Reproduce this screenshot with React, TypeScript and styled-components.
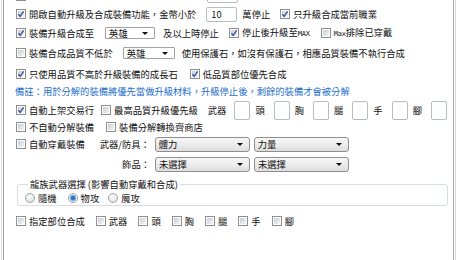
import React from "react";
import styled, { createGlobalStyle } from "styled-components";

const GlobalStyle = createGlobalStyle`
  html, body {
    margin: 0;
    padding: 0;
    background: #fff;
  }
  body {
    font-family: "Noto Sans CJK TC", "Liberation Sans", sans-serif;
    font-size: 9.3px;
    color: #111;
  }
`;

const Frame = styled.div`
  width: 460px;
  height: 260px;
  overflow: hidden;
  display: flex;
  background: #fff;
`;

const EdgeLine = styled.div<{ $color: string; $ml?: number }>`
  flex: none;
  width: 1px;
  margin-left: ${p => p.$ml ?? 0}px;
  background: ${p => p.$color};
`;

const Panel = styled.div`
  flex: none;
  box-sizing: border-box;
  width: 449px;
  padding-left: 12px;
  display: flex;
  flex-direction: column;
`;

const Row = styled.div<{ $mt: number }>`
  flex: none;
  display: flex;
  align-items: center;
  height: 16px;
  margin-top: ${p => p.$mt}px;
  white-space: nowrap;
`;

const Text = styled.span<{ $ml?: number; $color?: string }>`
  margin-left: ${p => p.$ml ?? 0}px;
  color: ${p => p.$color ?? "#111"};
  line-height: 12px;
`;

// bitmap-looking latin bits ("MAX", "Max")
const Tiny = styled.span`
  font-family: "DejaVu Sans Mono", monospace;
  font-size: 7px;
  letter-spacing: -0.2px;
`;

const CheckWrap = styled.label<{ $ml?: number }>`
  display: flex;
  align-items: center;
  margin-left: ${p => p.$ml ?? 0}px;
`;

const Box = styled.span`
  box-sizing: border-box;
  width: 10px;
  height: 10px;
  border: 1px solid #8e8f8f;
  background: #fff;
  padding: 1px;
  display: flex;
`;

const BoxInner = styled.span`
  flex: 1;
  display: flex;
  align-items: center;
  justify-content: center;
  background: linear-gradient(135deg, #c9cdd3, #f4f5f6);
`;

const CheckText = styled.span`
  margin-left: 3px;
  line-height: 12px;
`;

const CheckBox = ({ checked, label, ml }: { checked?: boolean; label?: React.ReactNode; ml?: number }) => (
  <CheckWrap $ml={ml}>
    <Box>
      <BoxInner>
        {checked && (
          <svg width="8" height="8" viewBox="0 0 8 8" style={{ margin: -2 }}>
            <path d="M1.4 4.2 L3.2 6.3 L6.7 1.3" fill="none" stroke="#3a55a0" strokeWidth="1.4" />
          </svg>
        )}
      </BoxInner>
    </Box>
    {label && <CheckText>{label}</CheckText>}
  </CheckWrap>
);

const RadioDot = styled.span<{ $on?: boolean }>`
  box-sizing: border-box;
  width: 10px;
  height: 10px;
  border-radius: 50%;
  border: 1px solid #9ea3a8;
  background: ${p =>
    p.$on
      ? "radial-gradient(circle, #1c5fb8 0, #3b86d6 2px, #9cc6ee 3px, #eef1f4 3.6px)"
      : "radial-gradient(circle at 40% 35%, #fdfdfd, #d6dade)"};
`;

const Radio = ({ on, label, ml }: { on?: boolean; label: string; ml?: number }) => (
  <CheckWrap $ml={ml}>
    <RadioDot $on={on} />
    <CheckText>{label}</CheckText>
  </CheckWrap>
);

const Field = styled.div<{ $ml?: number; $w: number; $h: number }>`
  flex: none;
  box-sizing: border-box;
  margin-left: ${p => p.$ml ?? 0}px;
  width: ${p => p.$w}px;
  height: ${p => p.$h}px;
  border: 1px solid #b5bcc4;
  border-radius: 2px;
  background: #fff;
  padding-left: 4px;
  display: flex;
  align-items: center;
  line-height: 12px;
`;

const Combo = styled.div<{ $ml?: number; $w: number; $h: number; $raised?: boolean }>`
  flex: none;
  box-sizing: border-box;
  margin-left: ${p => p.$ml ?? 0}px;
  width: ${p => p.$w}px;
  height: ${p => p.$h}px;
  border: 1px solid ${p => (p.$raised ? "#8f8f8f" : "#a3a3a3")};
  border-radius: ${p => (p.$raised ? 3 : 1)}px;
  background: ${p => (p.$raised ? "linear-gradient(#f7f7f7, #ececec 50%, #dedede)" : "#fff")};
  padding: 0 6px 0 3px;
  display: flex;
  align-items: center;
  justify-content: space-between;
  line-height: 12px;
`;

const Arrow = styled.span`
  width: 0;
  height: 0;
  border-left: 3px solid transparent;
  border-right: 3px solid transparent;
  border-top: 3px solid #111;
`;

const Select = ({ value, w, h, ml, raised }: { value: string; w: number; h: number; ml?: number; raised?: boolean }) => (
  <Combo $w={w} $h={h} $ml={ml} $raised={raised}>
    <span>{value}</span>
    <Arrow />
  </Combo>
);

const FieldLabel = styled.span<{ $ml: number }>`
  flex: none;
  width: 56px;
  margin-left: ${p => p.$ml}px;
  text-align: right;
  line-height: 12px;
`;

const Group = styled.fieldset`
  flex: none;
  box-sizing: border-box;
  width: 431px;
  margin: 6px 0 0 1px;
  padding: 0 0 0 7px;
  border: 1px solid #d7dee4;
  border-radius: 3px;
`;

const Legend = styled.legend`
  margin-left: 3px;
  padding: 0 2px;
  line-height: 12px;
`;

const RadioRow = styled.div`
  display: flex;
  align-items: center;
  height: 15px;
`;

const slots = ["頭", "胸", "腿", "手", "腳"];
const parts = ["武器", "頭", "胸", "腿", "手", "腳"];

export default function App() {
  return (
    <>
      <GlobalStyle />
      <Frame>
        <EdgeLine $color="#dadada" $ml={1} />
        <EdgeLine $color="#a2a2a2" $ml={1} />
        <Panel>
          <Row $mt={-12}>
            <CheckBox />
            <Field $ml={181} $w={31} $h={14} />
          </Row>
          <Row $mt={2}>
            <CheckBox checked label="開啟自動升級及合成裝備功能，金幣小於" />
            <Field $ml={10} $w={31} $h={15}>10</Field>
            <Text $ml={5}>萬停止</Text>
            <CheckBox ml={10} checked label="只升級合成當前職業" />
          </Row>
          <Row $mt={3}>
            <CheckBox checked label="裝備升級合成至" />
            <Select value="英雄" w={50} h={12} ml={11} />
            <Text $ml={8}>及以上時停止</Text>
            <CheckBox ml={10} checked label={<>停止後升級至<Tiny>MAX</Tiny></>} />
            <CheckBox ml={11} label={<><Tiny>Max</Tiny>排除已穿戴</>} />
          </Row>
          <Row $mt={4}>
            <CheckBox label="裝備合成品質不低於" />
            <Select value="英雄" w={52} h={12} ml={10} />
            <Text $ml={7}>使用保護石，如沒有保護石，相應品質裝備不執行合成</Text>
          </Row>
          <Row $mt={5}>
            <CheckBox checked label="只使用品質不高於升級裝備的成長石" />
            <CheckBox ml={12} checked label="低品質部位優先合成" />
          </Row>
          <Row $mt={1}>
            <Text $ml={-1} $color="#1f70c8">
              備註：用於分解的裝備將優先當做升級材料，升級停止後，剩餘的裝備才會被分解
            </Text>
          </Row>
          <Row $mt={3}>
            <CheckBox checked label="自動上架交易行" />
            <CheckBox ml={7} label="最高品質升級優先級" />
            <Text $ml={10}>武器</Text>
            <Field $ml={8} $w={16} $h={19} />
            {slots.map(s => (
              <React.Fragment key={s}>
                <Text $ml={5}>{s}</Text>
                <Field $ml={9} $w={16} $h={19} />
              </React.Fragment>
            ))}
          </Row>
          <Row $mt={1}>
            <CheckBox label="不自動分解裝備" />
            <CheckBox ml={12} label="裝備分解轉換齊商店" />
          </Row>
          <Row $mt={1}>
            <CheckBox label="自動穿戴裝備" />
            <FieldLabel $ml={9}>武器/防具：</FieldLabel>
            <Select value="體力" w={95} h={15} ml={5} raised />
            <Select value="力量" w={95} h={15} ml={4} raised />
          </Row>
          <Row $mt={4}>
            <FieldLabel $ml={78}>飾品：</FieldLabel>
            <Select value="未選擇" w={95} h={15} ml={5} raised />
            <Select value="未選擇" w={95} h={15} ml={4} raised />
          </Row>
          <Group>
            <Legend>龍族武器選擇 (影響自動穿戴和合成)</Legend>
            <RadioRow>
              <Radio label="隨機" />
              <Radio ml={11} on label="物攻" />
              <Radio ml={9} label="魔攻" />
            </RadioRow>
          </Group>
          <Row $mt={7}>
            <CheckBox label="指定部位合成" />
            {parts.map((p, i) => (
              <CheckBox key={p} ml={i === 0 ? 11 : 11} label={p} />
            ))}
          </Row>
        </Panel>
        <EdgeLine $color="#a8a8a8" />
        <EdgeLine $color="#d6d6d6" $ml={1} />
      </Frame>
    </>
  );
}
